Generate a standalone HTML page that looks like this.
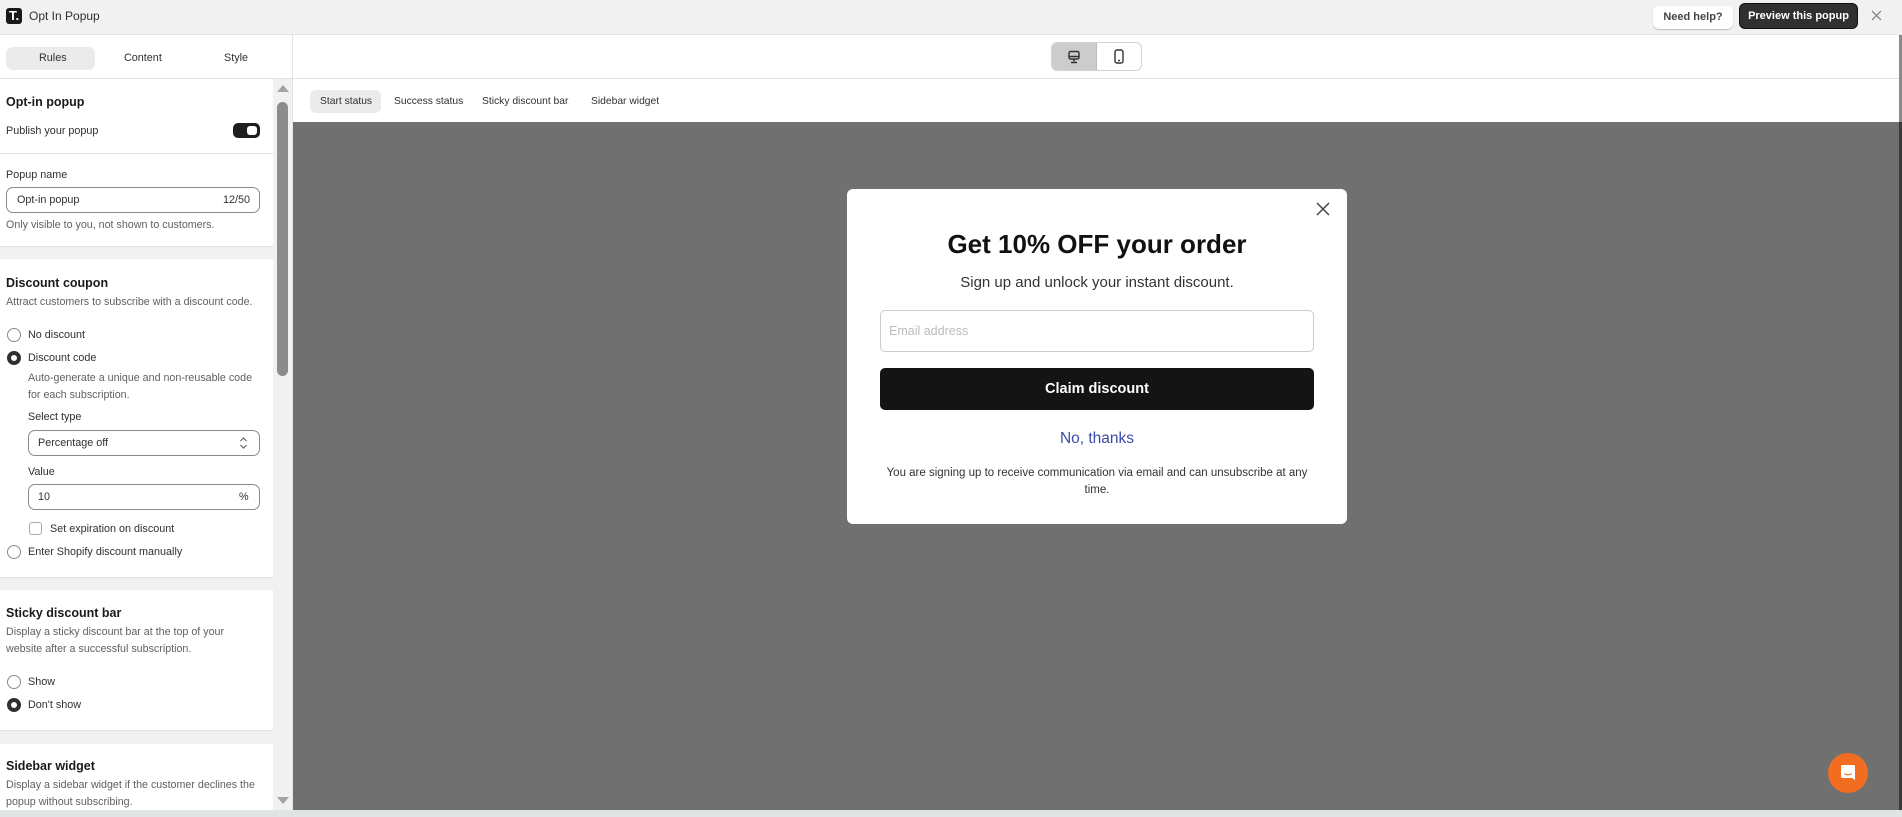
<!DOCTYPE html>
<html><head><meta charset="utf-8"><style>
*{box-sizing:border-box;margin:0;padding:0}
body{width:1902px;height:817px;overflow:hidden;background:#fff;font-family:"Liberation Sans",sans-serif;color:#303030;position:relative;font-size:10.8px}
.a{position:absolute}
.t{white-space:nowrap}
.h{font-weight:bold;font-size:12.5px;color:#1a1a1a}
.s{color:#616161;font-size:10.7px}
.radio{width:14px;height:14px;border:1px solid #8a8a8a;border-radius:50%;background:#fff}
.radio.on{border:4px solid #303030}
.inp{border:1px solid #8a8a8a;border-radius:7px;background:#fff}
</style></head><body>
<!-- top bar -->
<div class="a" style="left:0;top:0;width:1902px;height:35px;background:#f1f1f1;border-bottom:1px solid #e3e3e3"></div>
<div class="a" style="left:6px;top:8px;width:16px;height:16px;background:#1a1a1a;border-radius:3px;color:#fff;font-weight:bold;font-size:13px;line-height:16px;text-align:center">T.</div>
<div class="a t" style="left:29px;top:9px;font-size:12px;color:#303030">Opt In Popup</div>
<div class="a t" style="left:1653px;top:6px;width:80px;height:23px;background:#fff;border-radius:6px;box-shadow:0 1px 1px #bbb;font-size:11px;font-weight:bold;color:#444;text-align:center;line-height:23px">Need help?</div>
<div class="a t" style="left:1739px;top:3px;width:119px;height:26px;background:#303030;border:1px solid #111;border-radius:6px;font-size:11px;font-weight:bold;color:#fff;text-align:center;line-height:24px">Preview this popup</div>
<svg class="a" style="left:1871px;top:10px" width="11" height="11" viewBox="0 0 11 11" stroke="#888" stroke-width="1.3"><path d="M1 1l9 9M10 1L1 10"/></svg>

<!-- left panel -->
<div class="a" style="left:292px;top:35px;width:1px;height:775px;background:#e3e3e3"></div>
<div class="a" style="left:0;top:78px;width:292px;height:1px;background:#e3e3e3"></div>
<div class="a" style="left:6px;top:47px;width:89px;height:23px;background:#ebebeb;border-radius:7px"></div>
<div class="a t" style="left:39px;top:52px;font-size:10.8px">Rules</div>
<div class="a t" style="left:124px;top:52px;font-size:10.8px">Content</div>
<div class="a t" style="left:224px;top:52px;font-size:10.8px">Style</div>
<!-- scrollbar -->
<div class="a" style="left:273px;top:79px;width:19px;height:731px;background:#f1f1f1"></div>
<div class="a" style="left:277px;top:85px;width:0;height:0;border-left:6px solid transparent;border-right:6px solid transparent;border-bottom:7px solid #a3a3a3"></div>
<div class="a" style="left:277px;top:102px;width:11px;height:274px;background:#8c8c8c;border-radius:6px"></div>
<div class="a" style="left:277px;top:797px;width:0;height:0;border-left:6px solid transparent;border-right:6px solid transparent;border-top:7px solid #a3a3a3"></div>
<!-- gray gaps -->
<div class="a" style="left:0;top:246px;width:273px;height:13px;background:#f1f1f1;border-top:1px solid #e3e3e3"></div>
<div class="a" style="left:0;top:577px;width:273px;height:13px;background:#f1f1f1;border-top:1px solid #e3e3e3"></div>
<div class="a" style="left:0;top:730px;width:273px;height:14px;background:#f1f1f1;border-top:1px solid #e3e3e3"></div>
<div class="a" style="left:0;top:153px;width:273px;height:1px;background:#e3e3e3"></div>

<div class="a t h" style="left:6px;top:95px">Opt-in popup</div>
<div class="a t" style="left:6px;top:125px">Publish your popup</div>
<div class="a" style="left:233px;top:123px;width:27px;height:15px;background:#1f1f1f;border-radius:5px"></div>
<div class="a" style="left:247px;top:126px;width:10px;height:9px;background:#fff;border-radius:3px"></div>

<div class="a t" style="left:6px;top:169px">Popup name</div>
<div class="a inp" style="left:6px;top:187px;width:254px;height:26px"></div>
<div class="a t" style="left:17px;top:194px">Opt-in popup</div>
<div class="a t" style="left:223px;top:194px">12/50</div>
<div class="a t s" style="left:6px;top:219px">Only visible to you, not shown to customers.</div>

<div class="a t h" style="left:6px;top:276px">Discount coupon</div>
<div class="a t s" style="left:6px;top:296px">Attract customers to subscribe with a discount code.</div>
<div class="a radio" style="left:7px;top:328px"></div><div class="a t" style="left:28px;top:329px">No discount</div>
<div class="a radio on" style="left:7px;top:351px"></div><div class="a t" style="left:28px;top:352px">Discount code</div>
<div class="a t s" style="left:28px;top:372px">Auto-generate a unique and non-reusable code</div>
<div class="a t s" style="left:28px;top:389px">for each subscription.</div>
<div class="a t" style="left:28px;top:411px">Select type</div>
<div class="a inp" style="left:28px;top:430px;width:232px;height:26px"></div>
<div class="a t" style="left:38px;top:437px">Percentage off</div>
<svg class="a" style="left:239px;top:436px" width="9" height="14" viewBox="0 0 9 14" fill="none" stroke="#666" stroke-width="1.2"><path d="M1.5 5l3-3 3 3M1.5 9l3 3 3-3"/></svg>
<div class="a t" style="left:28px;top:466px">Value</div>
<div class="a inp" style="left:28px;top:484px;width:232px;height:26px"></div>
<div class="a t" style="left:38px;top:491px">10</div>
<div class="a t" style="left:239px;top:491px">%</div>
<div class="a" style="left:29px;top:522px;width:13px;height:13px;border:1px solid #aaa;border-radius:3px"></div>
<div class="a t" style="left:50px;top:523px">Set expiration on discount</div>
<div class="a radio" style="left:7px;top:545px"></div><div class="a t" style="left:28px;top:546px">Enter Shopify discount manually</div>

<div class="a t h" style="left:6px;top:606px">Sticky discount bar</div>
<div class="a t s" style="left:6px;top:626px">Display a sticky discount bar at the top of your</div>
<div class="a t s" style="left:6px;top:643px">website after a successful subscription.</div>
<div class="a radio" style="left:7px;top:675px"></div><div class="a t" style="left:28px;top:676px">Show</div>
<div class="a radio on" style="left:7px;top:698px"></div><div class="a t" style="left:28px;top:699px">Don't show</div>

<div class="a t h" style="left:6px;top:759px">Sidebar widget</div>
<div class="a t s" style="left:6px;top:779px">Display a sidebar widget if the customer declines the</div>
<div class="a t s" style="left:6px;top:796px">popup without subscribing.</div>

<!-- right header -->
<div class="a" style="left:293px;top:78px;width:1606px;height:1px;background:#e3e3e3"></div>
<div class="a" style="left:1051px;top:42px;width:91px;height:29px;border:1px solid #d4d4d4;border-radius:6px;overflow:hidden;background:#fff">
 <div style="width:45px;height:100%;background:#cccccc;border-right:1px solid #bbb"></div>
</div>
<svg class="a" style="left:1066px;top:49px" width="16" height="16" viewBox="0 0 16 16" fill="none" stroke="#333" stroke-width="1.4"><rect x="3" y="2.5" width="10" height="7.5" rx="1.5"/><path d="M3 7.5h10M8 10v2.5M5 13.5h6"/></svg>
<svg class="a" style="left:1112px;top:48px" width="14" height="18" viewBox="0 0 14 18" fill="none" stroke="#333" stroke-width="1.4"><rect x="3" y="2" width="8" height="13" rx="2"/><path d="M6 12.5h2"/></svg>
<div class="a" style="left:310px;top:90px;width:71px;height:23px;background:#ebebeb;border-radius:6px"></div>
<div class="a t" style="left:320px;top:96px;font-size:10.3px;color:#303030">Start status</div>
<div class="a t" style="left:394px;top:96px;font-size:10.3px;color:#303030">Success status</div>
<div class="a t" style="left:482px;top:96px;font-size:10.3px;color:#303030">Sticky discount bar</div>
<div class="a t" style="left:591px;top:96px;font-size:10.3px;color:#303030">Sidebar widget</div>

<!-- preview -->
<div class="a" style="left:293px;top:122px;width:1606px;height:688px;background:#707070"></div>
<div class="a" style="left:1899px;top:35px;width:3px;height:775px;background:#8a8a8a"></div>
<div class="a" style="left:1899px;top:122px;width:3px;height:688px;background:#3a3a3a"></div>
<div class="a" style="left:0;top:810px;width:1902px;height:7px;background:#e0e4e4"></div>

<div class="a" style="left:847px;top:189px;width:500px;height:335px;background:#fff;border-radius:6px"></div>
<svg class="a" style="left:1315px;top:201px" width="16" height="16" viewBox="0 0 16 16" stroke="#444" stroke-width="1.5"><path d="M2 2l12 12M14 2L2 14"/></svg>
<div class="a t" style="left:847px;width:500px;top:229px;text-align:center;font-size:26px;font-weight:bold;color:#111">Get 10% OFF your order</div>
<div class="a t" style="left:847px;width:500px;top:274px;text-align:center;font-size:15px;color:#333">Sign up and unlock your instant discount.</div>
<div class="a" style="left:880px;top:310px;width:434px;height:42px;border:1px solid #ccc;border-radius:5px"></div>
<div class="a t" style="left:889px;top:324px;font-size:12.5px;color:#bbb">Email address</div>
<div class="a" style="left:880px;top:368px;width:434px;height:42px;background:#141414;border-radius:5px;color:#fff;font-size:14.5px;font-weight:bold;text-align:center;line-height:42px">Claim discount</div>
<div class="a t" style="left:847px;width:500px;top:430px;text-align:center;font-size:15.5px;color:#3b4aa8">No, thanks</div>
<div class="a" style="left:880px;width:434px;top:465px;text-align:center;font-size:11.5px;line-height:17px;color:#333">You are signing up to receive communication via email and can unsubscribe at any time.</div>

<!-- chat -->
<div class="a" style="left:1828px;top:753px;width:40px;height:40px;border-radius:50%;background:#f36d21"></div>
<svg class="a" style="left:1838px;top:763px" width="20" height="20" viewBox="0 0 20 20"><path d="M3 3.5q0-1.5 1.5-1.5h11q1.5 0 1.5 1.5V17l-3-2H4.5Q3 15 3 13.5z" fill="#fff"/><path d="M6.5 10.5q3.5 2.5 7 0" fill="none" stroke="#f36d21" stroke-width="1.3"/></svg>
</body></html>
